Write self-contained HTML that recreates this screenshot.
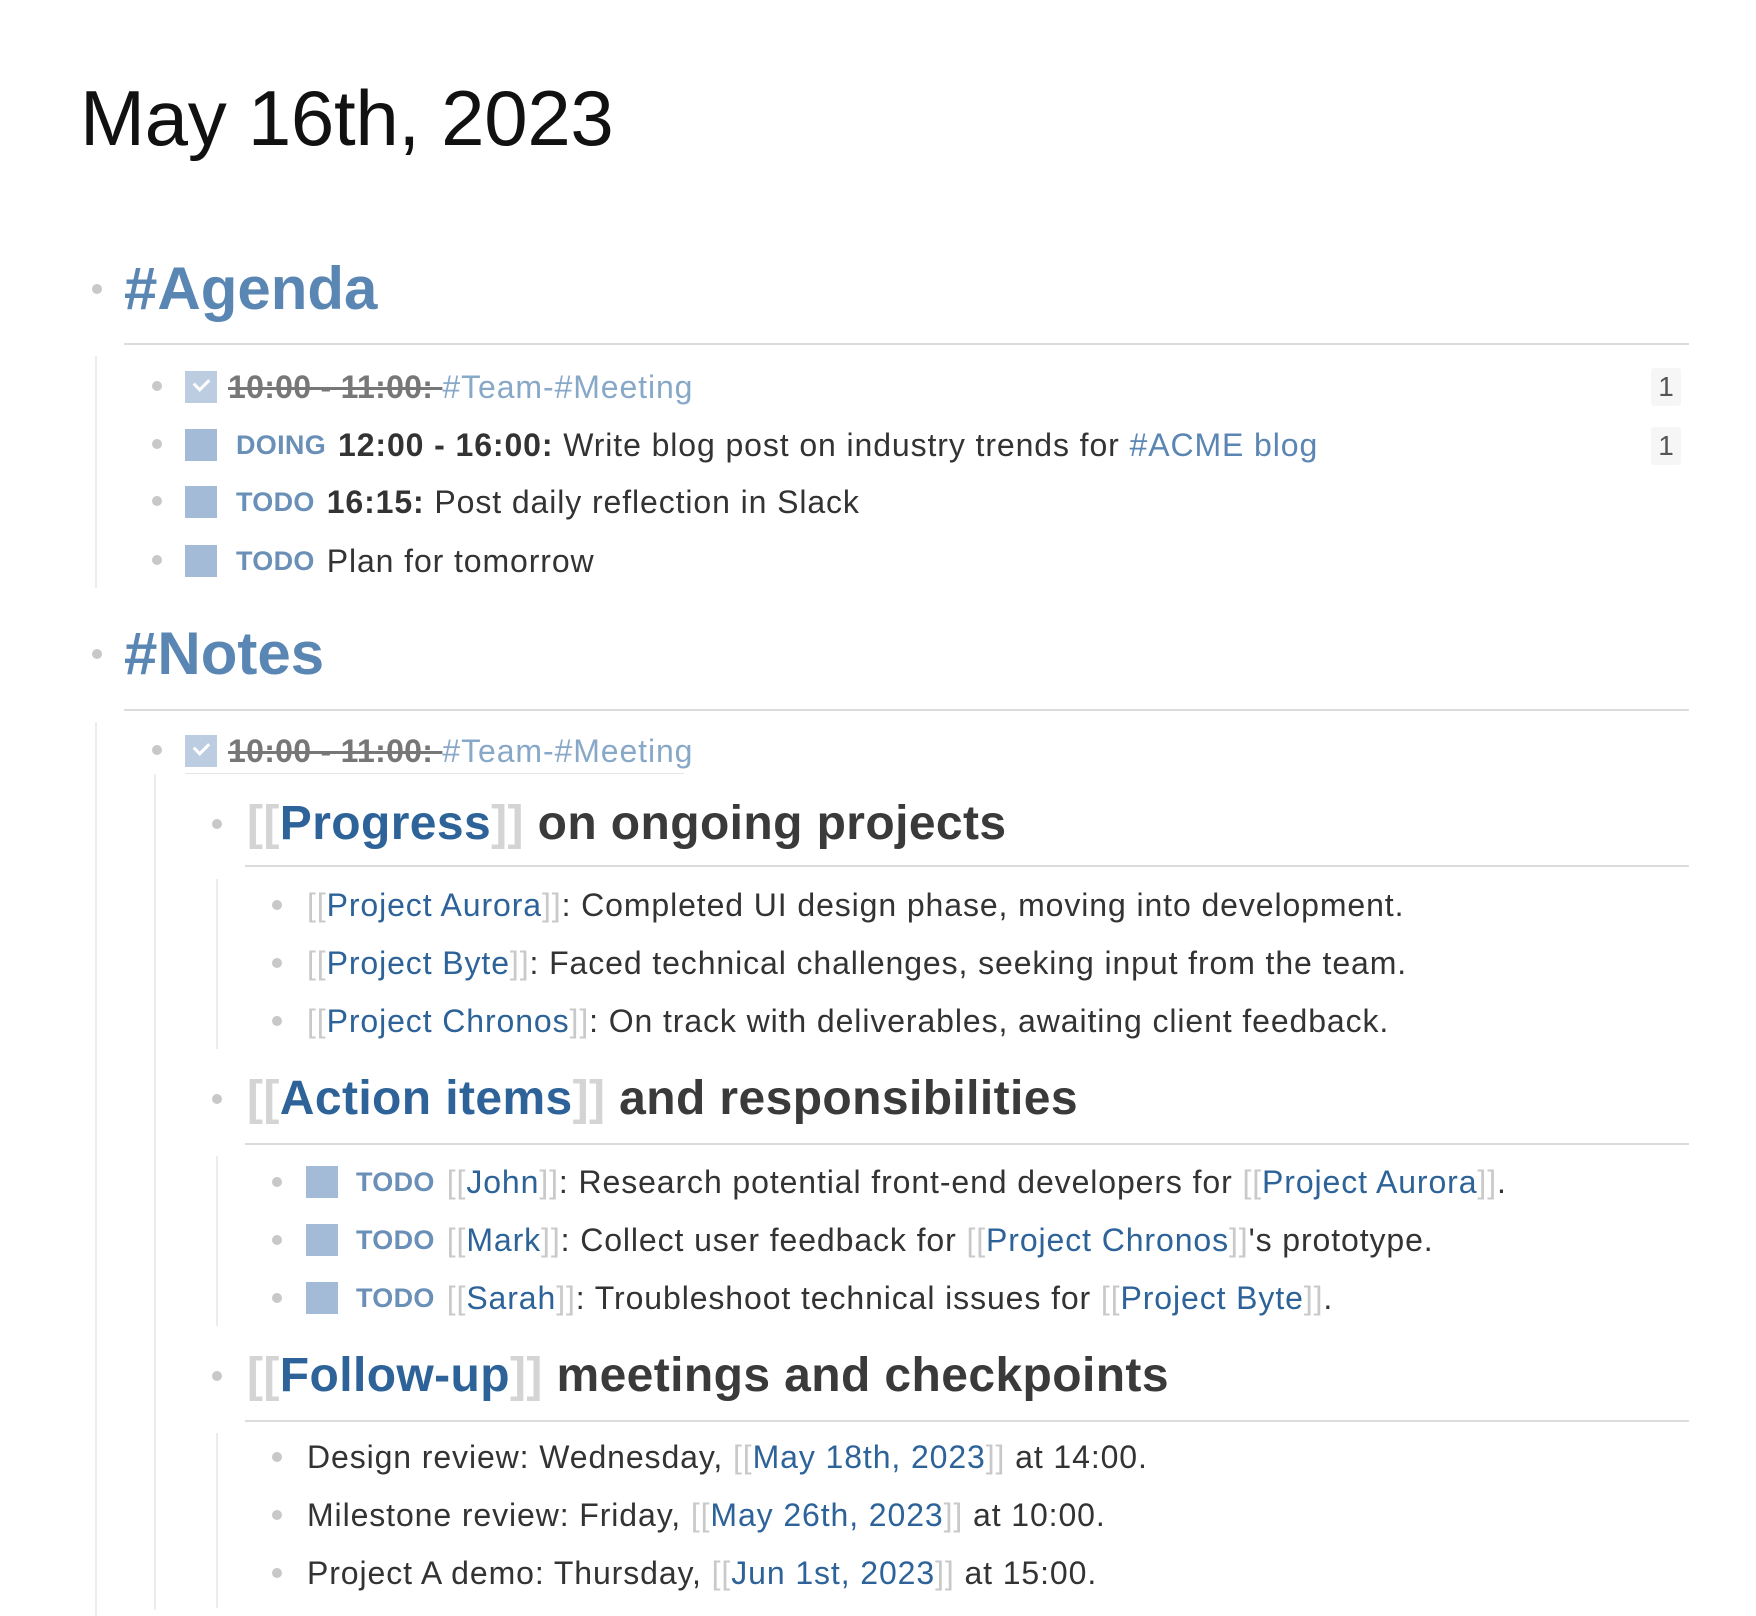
<!DOCTYPE html>
<html><head><meta charset="utf-8"><style>
*{margin:0;padding:0;box-sizing:border-box}
body{width:1756px;height:1616px;background:#fff;position:relative;overflow:hidden;font-family:"Liberation Sans",sans-serif;color:#333}
.a{position:absolute}
.row{position:absolute;height:44px;line-height:44px;display:flex;align-items:center;white-space:nowrap;font-size:32px;letter-spacing:0.9px}
.dot{position:absolute;width:10px;height:10px;border-radius:50%;background:#c8c8c8}
.vl{position:absolute;width:2px;background:#ececec}
.hr{position:absolute;height:2px;background:#dcdcdc}
.cb{width:32px;height:32px;background:#a3bbd7;display:inline-block;margin-right:11px;flex:none;position:relative}
.cbd{background:#bccde2}
.cbd:after{content:"";position:absolute;left:9px;top:7px;width:12px;height:7px;border-left:3px solid #fff;border-bottom:3px solid #fff;transform:rotate(-45deg)}
.mk{color:#6a90b8;font-weight:bold;font-size:27px;margin-right:12px;letter-spacing:0.3px}
.tag{color:#5b86b3}
.tagl{color:#88a8c8}
.lk{color:#2d6398}
.br{color:#c9c9c9}
.st{text-decoration:line-through;color:#777;font-weight:bold;letter-spacing:0.3px}
.h{font-weight:bold;font-size:48px;color:#3a3a3a;letter-spacing:0.4px}
.h .br{font-weight:bold;color:#d4d4d4}
.badge{position:absolute;left:1651px;width:30px;height:38px;background:#f6f6f6;border-radius:3px;font-size:28px;line-height:38px;text-align:center;color:#555}
</style></head><body>
<div class="a" style="left:80px;top:68px;font-size:78px;line-height:100px;color:#111;letter-spacing:-0.3px">May 16th, 2023</div>

<div class="dot" style="left:92px;top:284px"></div>
<div class="a" style="left:124px;top:254px;font-size:60px;line-height:70px;font-weight:bold;color:#5a86b3">#Agenda</div>
<div class="hr" style="left:124px;top:343px;width:1565px"></div>
<div class="vl" style="left:95px;top:356px;height:232px"></div>

<div class="dot" style="left:152px;top:381px"></div>
<div class="row" style="left:185px;top:365px"><span class="cb cbd"></span><span class="st">10:00 - 11:00:&nbsp;</span><span class="tagl">#Team-#Meeting</span></div>
<div class="badge" style="top:368px">1</div>
<div class="dot" style="left:152px;top:439px"></div>
<div class="row" style="left:185px;top:423px"><span class="cb"></span><span class="mk" style="margin-left:8px">DOING</span><b>12:00 - 16:00:</b>&nbsp;Write blog post on industry trends for&nbsp;<span class="tag">#ACME blog</span></div>
<div class="badge" style="top:427px">1</div>
<div class="dot" style="left:152px;top:496px"></div>
<div class="row" style="left:185px;top:480px"><span class="cb"></span><span class="mk" style="margin-left:8px">TODO</span><b>16:15:</b>&nbsp;Post daily reflection in Slack</div>
<div class="dot" style="left:152px;top:555px"></div>
<div class="row" style="left:185px;top:539px"><span class="cb"></span><span class="mk" style="margin-left:8px">TODO</span>Plan for tomorrow</div>

<div class="dot" style="left:92px;top:649px"></div>
<div class="a" style="left:124px;top:619px;font-size:60px;line-height:70px;font-weight:bold;color:#5a86b3">#Notes</div>
<div class="hr" style="left:124px;top:709px;width:1565px"></div>
<div class="vl" style="left:95px;top:722px;height:894px"></div>

<div class="dot" style="left:152px;top:745px"></div>
<div class="row" style="left:185px;top:729px"><span class="cb cbd"></span><span class="st">10:00 - 11:00:&nbsp;</span><span class="tagl">#Team-#Meeting</span></div>
<div class="hr" style="left:185px;top:773px;width:499px;height:1px;background:#e4e4e4"></div>
<div class="vl" style="left:154px;top:774px;height:836px"></div>

<div class="dot" style="left:212px;top:819px"></div>
<div class="row h" style="left:247px;top:795px;height:58px;line-height:58px"><span class="br">[[</span><span class="lk">Progress</span><span class="br">]]</span>&nbsp;on ongoing projects</div>
<div class="hr" style="left:245px;top:865px;width:1444px"></div>
<div class="vl" style="left:216px;top:879px;height:170px"></div>
<div class="dot" style="left:272px;top:900px"></div>
<div class="row" style="left:307px;top:883px"><span class="br">[[</span><span class="lk">Project Aurora</span><span class="br">]]</span>: Completed UI design phase, moving into development.</div>
<div class="dot" style="left:272px;top:958px"></div>
<div class="row" style="left:307px;top:941px"><span class="br">[[</span><span class="lk">Project Byte</span><span class="br">]]</span>: Faced technical challenges, seeking input from the team.</div>
<div class="dot" style="left:272px;top:1016px"></div>
<div class="row" style="left:307px;top:999px"><span class="br">[[</span><span class="lk">Project Chronos</span><span class="br">]]</span>: On track with deliverables, awaiting client feedback.</div>

<div class="dot" style="left:212px;top:1094px"></div>
<div class="row h" style="left:247px;top:1070px;height:58px;line-height:58px"><span class="br">[[</span><span class="lk">Action items</span><span class="br">]]</span>&nbsp;and responsibilities</div>
<div class="hr" style="left:245px;top:1143px;width:1444px"></div>
<div class="vl" style="left:216px;top:1156px;height:170px"></div>
<div class="dot" style="left:272px;top:1177px"></div>
<div class="row" style="left:306px;top:1160px"><span class="cb"></span><span class="mk" style="margin-left:7px">TODO</span><span class="br">[[</span><span class="lk">John</span><span class="br">]]</span>: Research potential front-end developers for&nbsp;<span class="br">[[</span><span class="lk">Project Aurora</span><span class="br">]]</span>.</div>
<div class="dot" style="left:272px;top:1235px"></div>
<div class="row" style="left:306px;top:1218px"><span class="cb"></span><span class="mk" style="margin-left:7px">TODO</span><span class="br">[[</span><span class="lk">Mark</span><span class="br">]]</span>: Collect user feedback for&nbsp;<span class="br">[[</span><span class="lk">Project Chronos</span><span class="br">]]</span>'s prototype.</div>
<div class="dot" style="left:272px;top:1293px"></div>
<div class="row" style="left:306px;top:1276px"><span class="cb"></span><span class="mk" style="margin-left:7px">TODO</span><span class="br">[[</span><span class="lk">Sarah</span><span class="br">]]</span>: Troubleshoot technical issues for&nbsp;<span class="br">[[</span><span class="lk">Project Byte</span><span class="br">]]</span>.</div>

<div class="dot" style="left:212px;top:1371px"></div>
<div class="row h" style="left:247px;top:1347px;height:58px;line-height:58px"><span class="br">[[</span><span class="lk">Follow-up</span><span class="br">]]</span>&nbsp;meetings and checkpoints</div>
<div class="hr" style="left:245px;top:1420px;width:1444px"></div>
<div class="vl" style="left:216px;top:1433px;height:175px"></div>
<div class="dot" style="left:272px;top:1452px"></div>
<div class="row" style="left:307px;top:1435px">Design review: Wednesday,&nbsp;<span class="br">[[</span><span class="lk">May 18th, 2023</span><span class="br">]]</span>&nbsp;at 14:00.</div>
<div class="dot" style="left:272px;top:1510px"></div>
<div class="row" style="left:307px;top:1493px">Milestone review: Friday,&nbsp;<span class="br">[[</span><span class="lk">May 26th, 2023</span><span class="br">]]</span>&nbsp;at 10:00.</div>
<div class="dot" style="left:272px;top:1568px"></div>
<div class="row" style="left:307px;top:1551px">Project A demo: Thursday,&nbsp;<span class="br">[[</span><span class="lk">Jun 1st, 2023</span><span class="br">]]</span>&nbsp;at 15:00.</div>
</body></html>
